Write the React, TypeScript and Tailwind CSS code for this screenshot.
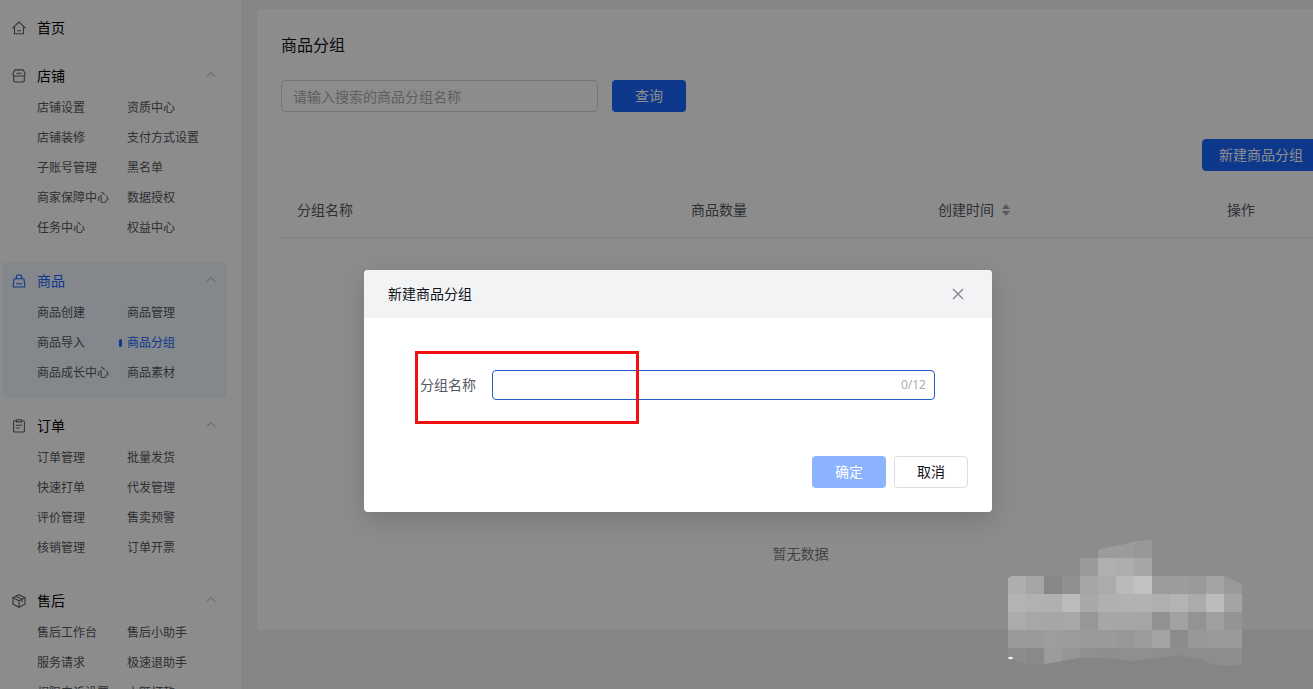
import { useState } from "react";

interface MenuSection {
  title: string;
  icon: string;
  active?: boolean;
  items: string[];
}

const SECTIONS: MenuSection[] = [
  {
    title: "店铺",
    icon: "shop",
    items: [
      "店铺设置",
      "资质中心",
      "店铺装修",
      "支付方式设置",
      "子账号管理",
      "黑名单",
      "商家保障中心",
      "数据授权",
      "任务中心",
      "权益中心",
    ],
  },
  {
    title: "商品",
    icon: "bag",
    active: true,
    items: ["商品创建", "商品管理", "商品导入", "商品分组", "商品成长中心", "商品素材"],
  },
  {
    title: "订单",
    icon: "order",
    items: [
      "订单管理",
      "批量发货",
      "快速打单",
      "代发管理",
      "评价管理",
      "售卖预警",
      "核销管理",
      "订单开票",
    ],
  },
  {
    title: "售后",
    icon: "box",
    items: ["售后工作台", "售后小助手", "服务请求", "极速退助手", "权限申诉设置", "小额打款"],
  },
];

const CURRENT = "商品分组";

// Pixelated patch: one grey level per 18px cell, 0 is empty
const CELL = 18;
const MOSAIC: number[][] = [
  [0, 0, 0, 0, 0, 0x9b, 0x9b, 0x98, 0, 0, 0, 0, 0],
  [0, 0, 0, 0, 0x9a, 0xb0, 0xad, 0xa6, 0, 0, 0, 0, 0],
  [0xae, 0xa5, 0x87, 0x90, 0xa5, 0xab, 0xb9, 0xc1, 0x9c, 0x9c, 0x9a, 0xa4, 0x99],
  [0xb3, 0xb1, 0xb0, 0xbb, 0xa8, 0xb0, 0xb1, 0xb1, 0xaf, 0xb3, 0xab, 0xbc, 0xa4],
  [0xab, 0xa7, 0xa6, 0xa7, 0x97, 0xa6, 0xa6, 0xa5, 0x91, 0xa1, 0x93, 0x9f, 0x94],
  [0x99, 0x99, 0x9d, 0x9b, 0x9a, 0x9a, 0x98, 0x9b, 0xa3, 0x8b, 0x98, 0x9a, 0x9a],
  [0x8c, 0x89, 0x9b, 0x95, 0x90, 0x8e, 0x8f, 0x8f, 0x8e, 0x8d, 0x8d, 0x8d, 0x8e],
];

function MenuIcon({ name }: { name: string }) {
  return (
    <svg
      viewBox="0 0 14 14"
      className="h-3.5 w-3.5 shrink-0"
      fill="none"
      stroke="currentColor"
      strokeWidth="1.1"
      strokeLinecap="round"
      strokeLinejoin="round"
    >
      {name === "home" && (
        <>
          <path d="M.8 6.8 7 1l6.200 5.800" />
          <path d="M2.500 5.800v6.900h9V5.800M5.500 9.700h3" />
        </>
      )}
      {name === "shop" && (
        <>
          <path d="M3.500.9h7c.6 0 1 .3 1.200.8L13 4.500v1c0 .9-.6 1.500-1.500 1.500h-9C1.600 7 1 6.400 1 5.500v-1l1.300-2.800c.2-.5.600-.8 1.200-.8z" />
          <path d="M1.700 7v4.500c0 .9.600 1.500 1.500 1.500h7.600c.9 0 1.500-.6 1.500-1.500V7M5 4.200h4" />
        </>
      )}
      {name === "bag" && (
        <>
          <path d="M2.800 4.700h8.400c.4 0 .7.300.8.700l.9 6.500c.1.600-.3 1.100-.9 1.100H2c-.6 0-1-.5-.9-1.100L2 5.400c.1-.4.400-.7.800-.7z" />
          <path d="M4.300 4.700V3.500a2.700 2.700 0 0 1 5.400 0v1.200M4.500 9.800h5" />
        </>
      )}
      {name === "order" && (
        <>
          <path d="M4.300 1.700H2.600c-.6 0-1 .4-1 1v9.300c0 .6.400 1 1 1h8.800c.6 0 1-.4 1-1V2.700c0-.6-.4-1-1-1H9.700" />
          <path d="M4.500.8h5v2.100h-5zM4.300 6.200h5.400M4.300 9h3" />
        </>
      )}
      {name === "box" && (
        <>
          <path d="M7 .8 13 3.800v6.400l-6 3-6-3V3.800z" />
          <path d="m1 3.800 6 3 6-3M7 6.800v6.400M4 2.300l6 3v2.400" />
        </>
      )}
    </svg>
  );
}

function Sidebar() {
  return (
    <nav className="flex w-[241px] shrink-0 flex-col gap-[9px] bg-white px-[3px] pt-[9px]">
      <a
        href="#"
        className="mb-[3px] flex h-9 shrink-0 items-center gap-[11px] pl-[9px] pt-0.5 text-sm text-black"
      >
        <span className="text-[#5c5f66]">
          <MenuIcon name="home" />
        </span>
        首页
      </a>
      {SECTIONS.map((section) => (
        <section
          key={section.title}
          className={`w-56 shrink-0 rounded pb-2.5 pl-[9px] ${section.active ? "bg-[#f0f6ff]" : ""}`}
        >
          <button
            className={`flex h-9 w-full items-center gap-[11px] pr-[11px] pt-0.5 text-sm ${
              section.active ? "text-[#1966ff]" : "text-black"
            }`}
          >
            <span className={section.active ? "text-[#1966ff]" : "text-[#5c5f66]"}>
              <MenuIcon name={section.icon} />
            </span>
            {section.title}
            <svg
              viewBox="0 0 10 10"
              className="mb-1 ml-auto h-2.5 w-2.5 text-[#a0a3a8]"
              fill="none"
              stroke="currentColor"
            >
              <path d="M1 7.500 5 3.500l4 4" />
            </svg>
          </button>
          <ul className="grid grid-cols-[90px_1fr] pl-[25px] text-xs leading-[30px] text-[#55585c]">
            {section.items.map((item) => (
              <li key={item} className="relative whitespace-nowrap">
                {item === CURRENT && (
                  <span className="absolute -left-2 top-[11px] h-2 w-[3px] rounded-sm bg-[#1966ff]" />
                )}
                <a href="#" className={item === CURRENT ? "text-[#1966ff]" : ""}>
                  {item}
                </a>
              </li>
            ))}
          </ul>
        </section>
      ))}
    </nav>
  );
}

function GroupPage() {
  return (
    <main className="flex-1 bg-[#f2f3f6] pl-4 pr-3 pt-[9px]">
      <div className="h-[621px] rounded bg-white px-6 pt-6">
        <h1 className="text-base leading-6 text-[#12141a]">商品分组</h1>
        <div className="mt-[23px] flex gap-3.5">
          <input
            aria-label="商品分组名称"
            placeholder="请输入搜索的商品分组名称"
            className="h-8 w-[317px] rounded border border-[#d3d5d9] px-[11px] text-sm placeholder:text-[#a9adb2]"
          />
          <button className="h-8 w-[74px] rounded bg-[#1966ff] text-sm text-white">查询</button>
        </div>
        <div className="mt-[27px] flex justify-end">
          <button className="h-8 rounded border border-[#1966ff] bg-[#1966ff] px-4 text-sm text-white">
            新建商品分组
          </button>
        </div>
        <table className="mt-3 w-full table-fixed text-left text-sm text-[#565960]">
          <thead>
            <tr className="h-[54px] border-b border-[#e9eaec]">
              <th className="w-[394px] px-4 font-normal">分组名称</th>
              <th className="w-[247px] px-4 font-normal">商品数量</th>
              <th className="w-[289px] px-4 font-normal">
                <span className="flex items-center gap-2">
                  创建时间
                  <svg viewBox="0 0 8 12" className="h-3 w-2 fill-[#a0a3a8]">
                    <path d="M4 0l4 5H0zM4 12l4-5H0z" />
                  </svg>
                </span>
              </th>
              <th className="px-4 font-normal">操作</th>
            </tr>
          </thead>
          <tbody>
            <tr>
              <td colSpan={4} className="pt-[306px] text-center text-[#7a7d83]">
                暂无数据
              </td>
            </tr>
          </tbody>
        </table>
      </div>
    </main>
  );
}

function CreateDialog() {
  const [name, setName] = useState("");

  return (
    <div className="absolute inset-0 flex items-start justify-center bg-black/45 pt-[270px]">
      <div
        role="dialog"
        aria-label="新建商品分组"
        className="w-[628px] overflow-hidden rounded bg-white text-sm shadow-[0_8px_24px_rgba(0,0,0,0.15)]"
      >
        <header className="flex h-12 items-center justify-between bg-[#f2f3f5] px-6 text-[#12141a]">
          <h2>新建商品分组</h2>
          <button aria-label="关闭" className="p-1 text-[#85878c]">
            <svg viewBox="0 0 12 12" className="h-3 w-3" fill="none" stroke="currentColor" strokeWidth="1.4">
              <path d="M1 1l10 10M11 1 1 11" />
            </svg>
          </button>
        </header>
        <div className="flex items-center gap-4 pl-14 pr-[57px] pt-[52px]">
          <label htmlFor="group-name" className="text-[#565960]">
            分组名称
          </label>
          <div className="flex h-[30px] flex-1 items-center rounded border border-[#1f5fc9] px-2">
            <input
              id="group-name"
              maxLength={12}
              value={name}
              onChange={(e) => setName(e.target.value)}
              className="min-w-0 flex-1 outline-none"
            />
            <span className="text-xs text-[#a9adb2]">{name.length}/12</span>
          </div>
        </div>
        <footer className="flex justify-end gap-2 px-6 pb-6 pt-14">
          <button className="h-8 w-[74px] rounded bg-[#8cb3ff] text-white">确定</button>
          <button className="h-8 w-[74px] rounded border border-[#dcdee1] text-[#12141a]">取消</button>
        </footer>
      </div>
    </div>
  );
}

function Mosaic() {
  return (
    <svg viewBox="0 0 234 126" className="absolute left-[1008px] top-[540px] h-[126px] w-[234px]">
      <clipPath id="patch">
        <path d="M0 38 4 36H72V18H90V10L100 7 118 4 128 1 144 0V36H216L234 44V124L226 126 205 125 192 119 170 115 150 118 125 121 96 118 70 118 55 121 36 124H18L8 121 0 116z" />
      </clipPath>
      <g clipPath="url(#patch)" shapeRendering="crispEdges">
        {MOSAIC.map((row, y) =>
          row.map(
            (level, x) =>
              level > 0 && (
                <rect
                  key={`${x}-${y}`}
                  x={x * CELL}
                  y={y * CELL}
                  width={CELL}
                  height={CELL}
                  fill={`rgb(${level},${level},${level})`}
                />
              )
          )
        )}
      </g>
      <ellipse cx="2.500" cy="118" rx="2.500" ry="1.200" fill="#eee" />
    </svg>
  );
}

export default function App() {
  return (
    <div className="h-screen overflow-hidden font-['Noto_Sans','Noto_Sans_CJK_SC',sans-serif]">
      <div className="relative flex h-full min-w-[1356px]">
        <Sidebar />
        <GroupPage />
        <CreateDialog />
        {/* Highlight frame around the name field */}
        <div className="absolute left-[415px] top-[351px] h-[73px] w-[224px] border-3 border-[#f01010]" />
        <Mosaic />
      </div>
    </div>
  );
}
